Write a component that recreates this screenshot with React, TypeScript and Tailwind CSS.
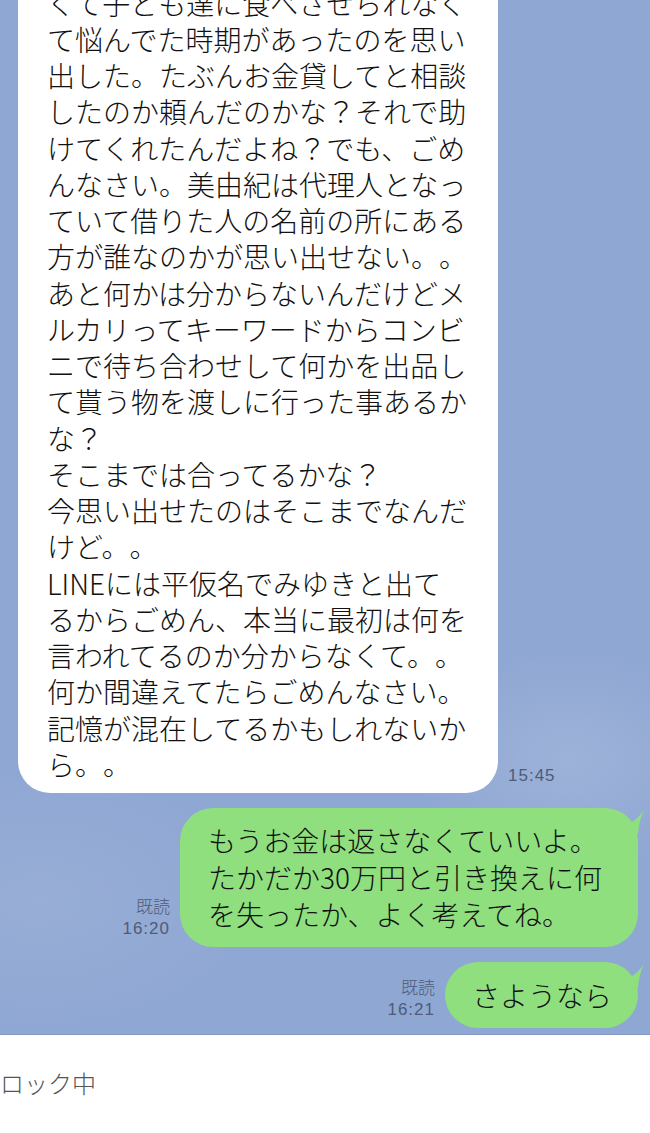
const incoming = [
  "くて子ども達に食べさせられなく",
  "て悩んでた時期があったのを思い",
  "出した。たぶんお金貸してと相談",
  "したのか頼んだのかな？それで助",
  "けてくれたんだよね？でも、ごめ",
  "んなさい。美由紀は代理人となっ",
  "ていて借りた人の名前の所にある",
  "方が誰なのかが思い出せない。。",
  "あと何かは分からないんだけどメ",
  "ルカリってキーワードからコンビ",
  "ニで待ち合わせして何かを出品し",
  "て貰う物を渡しに行った事あるか",
  "な？",
  "そこまでは合ってるかな？",
  "今思い出せたのはそこまでなんだ",
  "けど。。",
  "LINEには平仮名でみゆきと出て",
  "るからごめん、本当に最初は何を",
  "言われてるのか分からなくて。。",
  "何か間違えてたらごめんなさい。",
  "記憶が混在してるかもしれないか",
  "ら。。",
];

function Tail() {
  return (
    <svg
      className="absolute right-[-10px] top-[-2px]"
      width="26"
      height="30"
      viewBox="0 0 26 30"
    >
      <path d="M2 20 Q14 16 22 4 Q17 14 16 28 L2 28 Z" fill="#8fdf7f" />
    </svg>
  );
}

function Meta({ time }: { time: string }) {
  return (
    <div className="mr-[10px] mb-[8px] flex flex-col items-end text-[17px] leading-[21px] text-[#4f5b78] font-['Liberation_Sans','Noto_Sans_CJK_JP',sans-serif]">
      <span>既読</span>
      <span className="tracking-[1px]">{time}</span>
    </div>
  );
}

export default function App() {
  return (
    <div className="w-[650px] h-[1133px] overflow-hidden bg-white font-['Noto_Sans_CJK_JP',sans-serif] font-light text-[#111] [text-spacing-trim:space-all]">
      <div className="h-[1035px] overflow-hidden flex flex-col justify-end pb-[6px] border-b border-[#8598c2] bg-[#8fa7d3] bg-[radial-gradient(ellipse_160px_110px_at_570px_760px,rgba(255,255,255,0.13),transparent),radial-gradient(ellipse_220px_130px_at_40px_900px,rgba(255,255,255,0.08),transparent)]">
        {/* received */}
        <div className="flex items-end pl-[18px]">
          <div className="w-[480px] shrink-0 rounded-[32px] bg-white px-[29px] pt-[14px] pb-[11px] text-[28px] leading-[36.25px]">
            {incoming.map((l, i) => (
              <div key={i} className="whitespace-nowrap">
                {l}
              </div>
            ))}
          </div>
          <span className="ml-[10px] mb-[7px] text-[17px] leading-[21px] tracking-[1px] text-[#4f5b78] font-['Liberation_Sans',sans-serif]">
            15:45
          </span>
        </div>

        {/* sent 1 */}
        <div className="mt-[15px] flex items-end justify-end pr-[12px]">
          <Meta time="16:20" />
          <div className="relative w-[458px] rounded-[33px] bg-[#8fdf7f] pl-[28px] pr-[20px] py-[14px] text-[28px] leading-[37px]">
            <Tail />
            <div className="whitespace-nowrap">もうお金は返さなくていいよ。</div>
            <div className="whitespace-nowrap">たかだか30万円と引き換えに何</div>
            <div className="whitespace-nowrap">を失ったか、よく考えてね。</div>
          </div>
        </div>

        {/* sent 2 */}
        <div className="mt-[15px] flex items-end justify-end pr-[12px]">
          <Meta time="16:21" />
          <div className="relative rounded-[33px] bg-[#8fdf7f] pl-[27px] pr-[26px] py-[14.5px] text-[28px] leading-[37px]">
            <Tail />
            <div className="whitespace-nowrap">さようなら</div>
          </div>
        </div>
      </div>

      <div className="pt-[32px] text-[24px] leading-[32px] text-[#555]">ロック中</div>
    </div>
  );
}
